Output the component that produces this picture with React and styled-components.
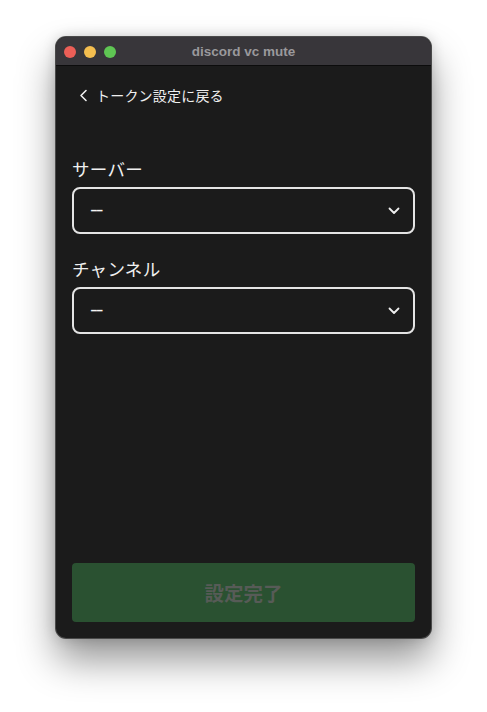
import styled, { createGlobalStyle } from 'styled-components'

const GlobalStyle = createGlobalStyle`
  html, body {
    margin: 0;
    padding: 0;
    background: #ffffff;
  }
  * { box-sizing: border-box; }
`;

const Page = styled.div`
  width: 487px;
  height: 712px;
  padding: 37px 0 0 56px;
  overflow: hidden;
`;

const Window = styled.div`
  width: 375px;
  height: 601px;
  display: flex;
  flex-direction: column;
  background: #1b1b1b;
  border-radius: 10px;
  overflow: hidden;
  box-shadow: 0 0 0 1px #4a4a4a, 0 22px 38px rgba(0, 0, 0, 0.42), 0 0 14px rgba(0, 0, 0, 0.18);
`;

const TitleBar = styled.div`
  height: 29px;
  flex-shrink: 0;
  position: relative;
  display: flex;
  align-items: center;
  justify-content: center;
  background: #38363a;
  border-bottom: 1px solid #0c0c0c;
`;

const Lights = styled.div`
  position: absolute;
  left: 8px;
  top: 9px;
  display: flex;
  gap: 8px;
`;

const Light = styled.span`
  width: 12px;
  height: 12px;
  border-radius: 50%;
  background: ${(p) => p.color};
`;

const Title = styled.span`
  font-family: "Liberation Sans", Arial, sans-serif;
  font-weight: 700;
  font-size: 13.5px;
  color: #9a999c;
`;

const Content = styled.div`
  flex: 1;
  display: flex;
  flex-direction: column;
  padding: 19px 16px 16px;
  font-family: "Noto Sans CJK JP", "Noto Sans", sans-serif;
  color: #f2f2f2;
`;

const BackLink = styled.a`
  display: flex;
  align-items: center;
  gap: 8px;
  padding-left: 7px;
  height: 20px;
  font-size: 14px;
  letter-spacing: 0.2px;
  color: #efefef;
  cursor: pointer;
  margin-bottom: 52px;
`;

const Field = styled.div`
  display: flex;
  flex-direction: column;
  gap: 6px;
  margin-bottom: 23px;
`;

const Label = styled.label`
  font-size: 17.5px;
  line-height: 24px;
  letter-spacing: 0.3px;
  color: #f0f0f0;
`;

const Select = styled.div`
  height: 47px;
  display: flex;
  align-items: center;
  justify-content: space-between;
  padding: 0 13px 0 16px;
  border: 2px solid #e4e4e4;
  border-radius: 8px;
  color: #f4f4f4;
`;

const Placeholder = styled.span`
  display: inline-block;
  font-family: "Liberation Sans", Arial, sans-serif;
  font-size: 18px;
  letter-spacing: -1.5px;
  transform: scaleX(1.3);
  transform-origin: left center;
`;

const Submit = styled.button`
  margin-top: auto;
  height: 59px;
  width: 100%;
  border: none;
  border-radius: 4px;
  background: #2a5131;
  color: #575b57;
  font-family: "Noto Sans CJK JP", "Noto Sans", sans-serif;
  font-weight: 700;
  font-size: 19.5px;
`;

const Chevron = ({ dir }) =>
  dir === 'left' ? (
    <svg width="9" height="13" viewBox="0 0 9 13" fill="none">
      <path d="M7 1.5 L2 6.5 L7 11.5" stroke="#eeeeee" strokeWidth="1.6" strokeLinecap="round" strokeLinejoin="round" />
    </svg>
  ) : (
    <svg width="12" height="8" viewBox="0 0 12 8" fill="none">
      <path d="M1.5 1.5 L6 6 L10.5 1.5" stroke="#eeeeee" strokeWidth="1.8" strokeLinecap="round" strokeLinejoin="round" />
    </svg>
  );

const fields = ['サーバー', 'チャンネル'];

export default function App() {
  return (
    <>
      <GlobalStyle />
      <Page>
        <Window>
          <TitleBar>
            <Lights>
              <Light color="#ec5f57" />
              <Light color="#f4be4f" />
              <Light color="#5fc653" />
            </Lights>
            <Title>discord vc mute</Title>
          </TitleBar>
          <Content>
            <BackLink>
              <Chevron dir="left" />
              トークン設定に戻る
            </BackLink>
            {fields.map((f) => (
              <Field key={f}>
                <Label>{f}</Label>
                <Select>
                  <Placeholder>--</Placeholder>
                  <Chevron dir="down" />
                </Select>
              </Field>
            ))}
            <Submit disabled>設定完了</Submit>
          </Content>
        </Window>
      </Page>
    </>
  );
}
